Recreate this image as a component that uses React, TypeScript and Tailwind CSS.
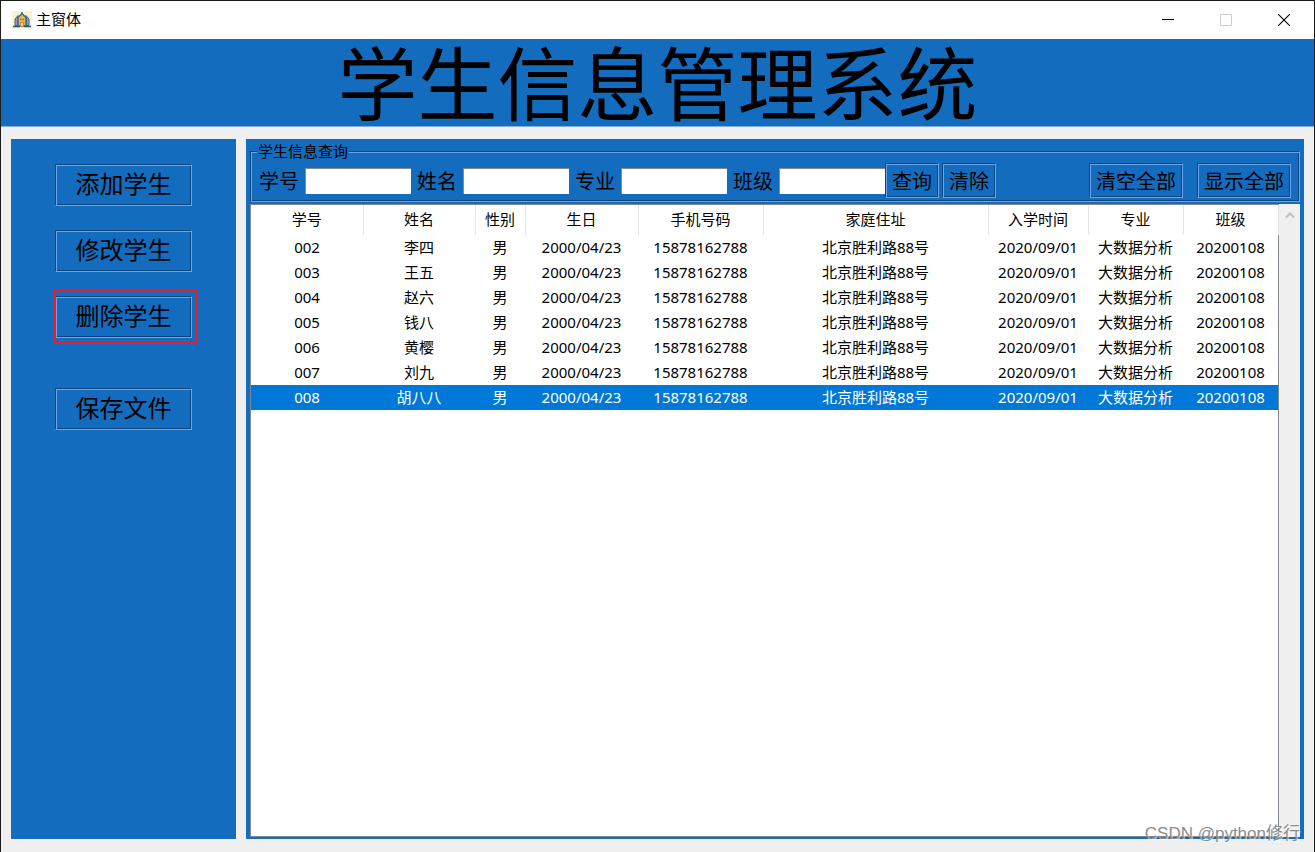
import React, { useState } from 'react';

interface Student {
    no: string;
    name: string;
    gender: string;
    birthday: string;
    mobile: string;
    address: string;
    enrolled: string;
    major: string;
    className: string;
}

const base = {
    gender: '男',
    birthday: '2000/04/23',
    mobile: '15878162788',
    address: '北京胜利路88号',
    enrolled: '2020/09/01',
    major: '大数据分析',
    className: '20200108',
};

const students: Student[] = [
    { no: '002', name: '李四', ...base },
    { no: '003', name: '王五', ...base },
    { no: '004', name: '赵六', ...base },
    { no: '005', name: '钱八', ...base },
    { no: '006', name: '黄樱', ...base },
    { no: '007', name: '刘九', ...base },
    { no: '008', name: '胡八八', ...base },
];

const columns: { key: keyof Student; title: string; width: string }[] = [
    { key: 'no', title: '学号', width: 'w-[112px]' },
    { key: 'name', title: '姓名', width: 'w-[112px]' },
    { key: 'gender', title: '性别', width: 'w-[50px]' },
    { key: 'birthday', title: '生日', width: 'w-[113px]' },
    { key: 'mobile', title: '手机号码', width: 'w-[125px]' },
    { key: 'address', title: '家庭住址', width: 'w-[225px]' },
    { key: 'enrolled', title: '入学时间', width: 'w-[100px]' },
    { key: 'major', title: '专业', width: 'w-[95px]' },
    { key: 'className', title: '班级', width: 'w-[95px]' },
];

const filters = [
    { id: 'no', label: '学号' },
    { id: 'name', label: '姓名' },
    { id: 'major', label: '专业' },
    { id: 'class', label: '班级' },
];

// two-tone groove line, dark outside on the top left and light outside on the bottom right
const groove =
    'border border-t-[#0c457c] border-l-[#0c457c] border-r-[#6fa3e8] border-b-[#6fa3e8] shadow-[inset_1px_1px_0_#6fa3e8,inset_-1px_-1px_0_#0c457c]';

const kai = "font-['KaiTi','Noto_Sans_CJK_SC',sans-serif]";

const HouseIcon = () => (
    <svg width="20" height="18" viewBox="0 0 20 18" aria-hidden="true">
        <rect width="20" height="18" fill="#fdf3d3" />
        <path d="M3 14.500V8l3-3.500v10z" fill="#9a93c9" stroke="#2f6f80" />
        <path d="M17 14.500V8l-3-3.500v10z" fill="#9a93c9" stroke="#2f6f80" />
        <path d="M6 15V6.500l4-4 4 4V15z" fill="#f0b548" stroke="#24708a" strokeWidth="1.400" />
        <path d="M10 1v2" stroke="#24708a" strokeWidth="1.400" />
        <path d="M8 8.500h1.500M10.500 8.500H12" stroke="#c2603a" strokeWidth="1.500" />
        <path d="M8.500 15.500v-4h3v4z" fill="#f7dc8b" stroke="#b06a3c" strokeWidth=".7" />
        <path d="M1 15.500h7M12 15.500h7" stroke="#1f5f66" strokeWidth="1.500" />
    </svg>
);

const TitleBar = () => (
    <header className="flex h-[38px] items-stretch justify-between bg-white">
        <div className="flex items-center gap-1 pl-[11px] pb-px text-[15px]">
            <HouseIcon />
            <span>主窗体</span>
        </div>
        <div className="flex pr-px">
            <button aria-label="最小化" className="flex w-[58px] items-center justify-center">
                <svg width="12" height="12" viewBox="0 0 12 12">
                    <path d="M0 5.500h12" stroke="#000" />
                </svg>
            </button>
            <button aria-label="最大化" disabled className="flex w-[58px] items-center justify-center">
                <svg width="12" height="12" viewBox="0 0 12 12">
                    <path d="M.5.500h11v11H.5z" fill="none" stroke="#ccc" />
                </svg>
            </button>
            <button aria-label="关闭" className="flex w-[58px] items-center justify-center">
                <svg width="12" height="12" viewBox="0 0 12 12">
                    <path d="M0 0l12 12M12 0L0 12" stroke="#000" strokeWidth="1.1" />
                </svg>
            </button>
        </div>
    </header>
);

const MenuButton: React.FC<{ children: React.ReactNode }> = ({ children }) => (
    <button className={`${groove} ${kai} h-[42px] w-[137px] pb-1 text-2xl leading-none`}>{children}</button>
);

const QueryButton: React.FC<{ children: React.ReactNode; onClick?: () => void }> = ({ children, onClick }) => (
    <button onClick={onClick} className={`${groove} ${kai} h-[35px] px-1.5 text-xl leading-none`}>
        {children}
    </button>
);

export default function App() {
    const [selected, setSelected] = useState('008');
    const [query, setQuery] = useState<Record<string, string>>({});

    return (
        <div className="relative flex min-h-screen flex-col border-x border-t border-[#1c1c1c] bg-[#efefef] font-['Noto_Sans','Noto_Sans_CJK_SC',sans-serif] text-black">
            <TitleBar />
            <h1 className={`${kai} h-[88px] border-b border-[#7fb0e0] bg-[#146cbe] text-center text-[80px] leading-[80px]`}>
                学生信息管理系统
            </h1>

            <main className="flex flex-1 gap-2.5 px-2.5 pt-3 pb-[13px]">
                <nav className="flex w-[225px] shrink-0 flex-col items-center gap-6 bg-[#146cbe] pt-[25px]">
                    <MenuButton>添加学生</MenuButton>
                    <MenuButton>修改学生</MenuButton>
                    <div className="relative flex">
                        <MenuButton>删除学生</MenuButton>
                        <span className="pointer-events-none absolute -top-1.5 -right-1.5 -bottom-1.5 -left-px border-2 border-[#ee1c25]" />
                    </div>
                    <div className="flex pt-[26px]">
                        <MenuButton>保存文件</MenuButton>
                    </div>
                </nav>

                <section className="flex min-w-0 flex-1 flex-col gap-0.5 bg-[#146cbe] px-1 pt-1 pb-0.5">
                    <fieldset className={`${groove} pt-1 pr-2 pb-[3px] pl-0.5`}>
                        <legend className="ml-1 bg-[#146cbe] px-px text-[15px] leading-4">学生信息查询</legend>
                        <div className="flex items-center">
                            {filters.map((f) => (
                                <div key={f.id} className="flex items-center">
                                    <label htmlFor={f.id} className={`${kai} px-1.5 text-xl leading-none`}>
                                        {f.label}
                                    </label>
                                    <input
                                        id={f.id}
                                        type="text"
                                        value={query[f.id] || ''}
                                        onChange={(e) => setQuery({ ...query, [f.id]: e.target.value })}
                                        className="h-[26px] w-[106px] border-t border-l border-[#8a8a8a] bg-white px-1 text-[15px] outline-none"
                                    />
                                </div>
                            ))}
                            <div className="flex gap-[3px]">
                                <QueryButton>查询</QueryButton>
                                <QueryButton onClick={() => setQuery({})}>清除</QueryButton>
                            </div>
                            <div className="ml-auto flex gap-3.5">
                                <QueryButton>清空全部</QueryButton>
                                <QueryButton>显示全部</QueryButton>
                            </div>
                        </div>
                    </fieldset>

                    <div className="flex flex-1">
                        <div className="min-w-0 flex-1 border border-[#828790] bg-white">
                            <table className="w-full table-fixed text-center text-[15px] leading-[25px]">
                                <thead>
                                    <tr className="h-[30px]">
                                        {columns.map((c) => (
                                            <th key={c.key} className={`${c.width} border-r border-[#e5e5e5] p-0 pb-0.5 font-normal`}>
                                                {c.title}
                                            </th>
                                        ))}
                                    </tr>
                                </thead>
                                <tbody>
                                    {students.map((s) => (
                                        <tr
                                            key={s.no}
                                            onClick={() => setSelected(s.no)}
                                            className={s.no === selected ? 'h-[25px] bg-[#0078d7] text-white' : 'h-[25px]'}
                                        >
                                            {columns.map((c) => (
                                                <td key={c.key} className="p-0 whitespace-nowrap">{s[c.key]}</td>
                                            ))}
                                        </tr>
                                    ))}
                                </tbody>
                            </table>
                        </div>
                        <div className="flex w-[21px] shrink-0 justify-center bg-[#f0f0f0] pt-2">
                            <svg width="10" height="7" viewBox="0 0 10 7" aria-hidden="true">
                                <path d="M1 5.500L5 1.500L9 5.500" fill="none" stroke="#bfbfbf" strokeWidth="2" />
                            </svg>
                        </div>
                    </div>
                </section>
            </main>

            <span className="absolute right-3.5 bottom-1.5 font-['Liberation_Sans','Noto_Sans_CJK_SC',sans-serif] text-[17px] leading-6 text-[#8c8c8c] [text-shadow:1px_1px_0_#ffffffa0]">
                CSDN @python修行
            </span>
        </div>
    );
}
